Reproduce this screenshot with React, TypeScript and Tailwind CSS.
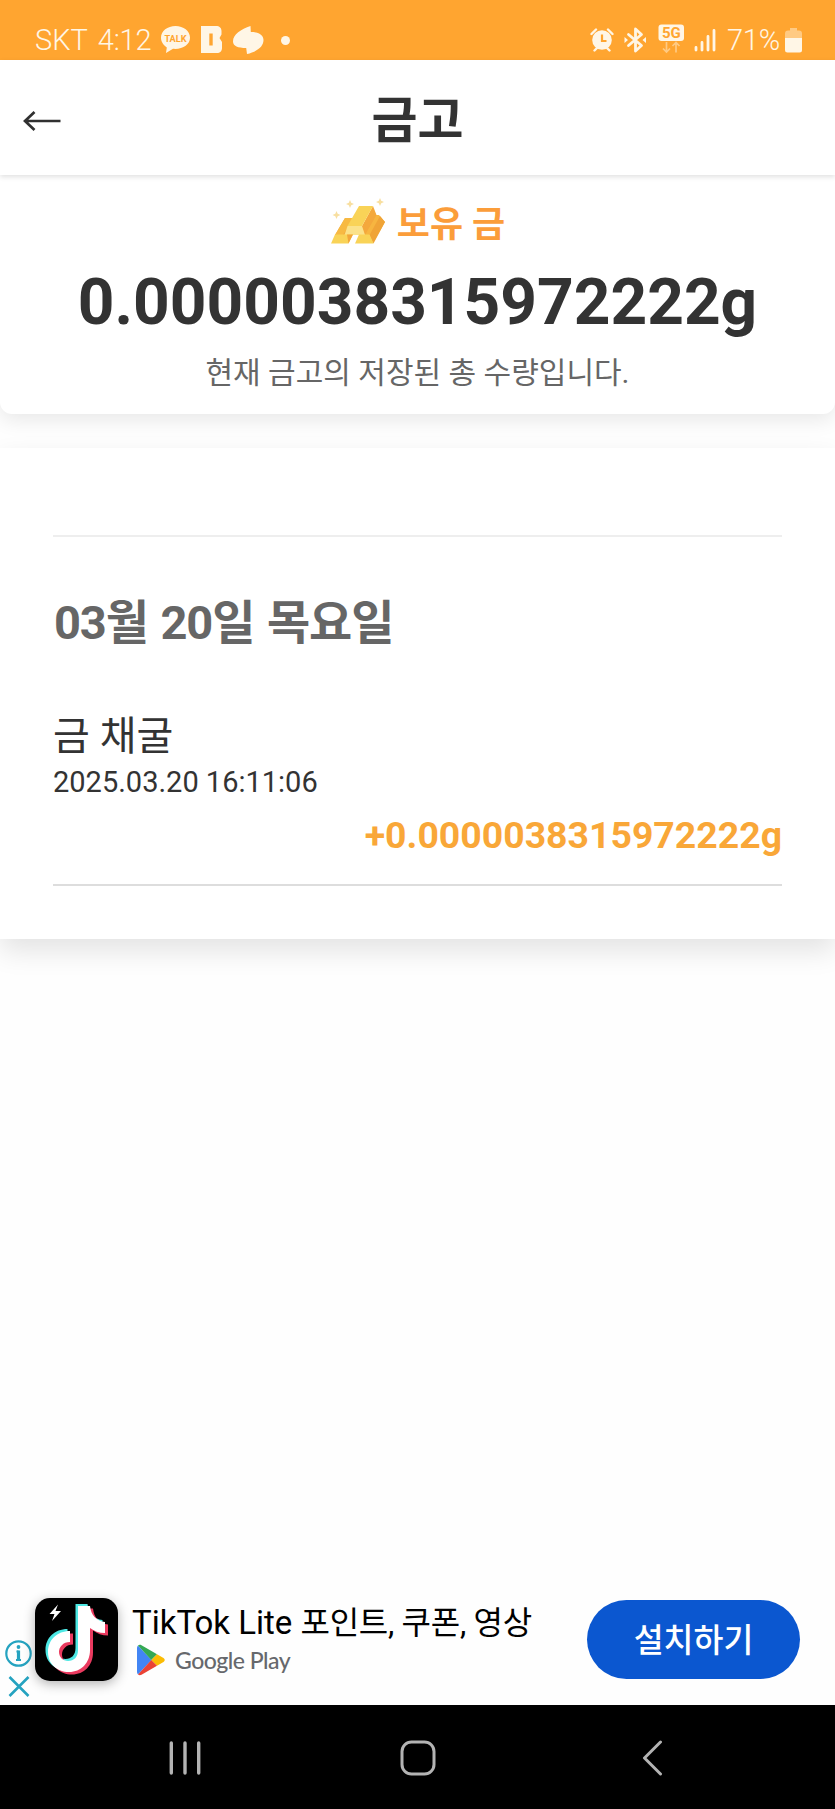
const cream = '#fff6e6';

function StatusBar() {
  return (
    <div className="flex h-[60px] shrink-0 items-end justify-between bg-[#ffa530] pl-[35px] pr-[33px] text-[29px] leading-[34px] font-light text-[#fff6e6]">
      <div className="mb-[3px] flex h-[34px] items-center">
        <span>SKT</span>
        <span className="ml-[10px] tracking-[-0.2px]">4:12</span>
        <svg className="ml-[10px]" width="29" height="28" viewBox="0 0 29 28" fill={cream}>
          <path d="M14.500 0C6.500 0 0 5 0 11.800c0 4.200 2.500 7.500 5.800 9.600L5 27l7-4.200c9.500.8 17-4 17-11C29 5 22.500 0 14.500 0z" />
          <text x="14.500" y="15.500" fontSize="9.200" fontWeight="700" textAnchor="middle" fill="#ffa530">TALK</text>
        </svg>
        <svg className="ml-[11px]" width="22" height="28" viewBox="0 0 22 28" fill={cream}>
          <path d="M0 0h15c3.500 0 5.500 2 5.500 5v3.500l-2 3.500 2.500 4v6c0 3-2 5-5 5H0z" />
          <path d="M8.300 7.500h3.400v12H8.300z" fill="#ffa530" />
        </svg>
        <svg className="ml-[10px]" width="31" height="28" viewBox="0 0 31 28" fill={cream}>
          <path d="M17.500 0l.3 6c7.500 0 12.700 2.500 12.700 8 0 6.500-6 11.500-16.500 14l-.8-6C5 22 0 20 0 15.500 0 8 8 3.500 17.500 0z" />
        </svg>
        <span className="ml-[17px] size-[9px] rounded-full bg-[#fff6e6]" />
      </div>
      <div className="mb-[3px] flex h-[34px] items-center">
        <svg width="24" height="26" viewBox="0 0 24 26">
          <circle cx="12" cy="13" r="9.800" fill={cream} />
          <path d="M1.500 7l4.500-4.500M22.500 7L18 2.500M4.500 23.500L7 21M19.500 23.500L17 21" stroke={cream} strokeWidth="2.400" fill="none" strokeLinecap="round" />
          <path d="M12 7.500v6.500h4.500" stroke="#ffa530" strokeWidth="2.200" fill="none" />
        </svg>
        <svg className="ml-[10px]" width="23" height="26" viewBox="0 0 23 26">
          <path d="M4.500 7.500l13 11-6 5.500V2l6 5.500-13 11" stroke={cream} strokeWidth="2.800" fill="none" strokeLinejoin="round" strokeLinecap="round" />
          <path d="M0.500 10v6l3.500-3zM22 10v6l-3.500-3z" fill={cream} />
        </svg>
        <svg className="mb-[2px] ml-[11px]" width="27" height="30" viewBox="0 0 27 30">
          <rect x="0.500" y="0.500" width="25.500" height="16.500" rx="3" fill={cream} />
          <text x="13.300" y="14" fontSize="15" fontWeight="700" textAnchor="middle" fill="#ffa530">5G</text>
          <path d="M8.500 18v9.500M5 24.500l3.500 3.500 3.500-3.500M18 28.500V19M14.500 22l3.500-3.500 3.500 3.500" stroke="#ffca83" strokeWidth="1.700" fill="none" />
        </svg>
        <svg className="ml-[9px]" width="22" height="24" viewBox="0 0 22 24" stroke={cream} strokeWidth="2.800" strokeLinecap="round">
          <path d="M2 19.500v2.500M8 14.500v7.500M14 8.500v13.500M20 2.500v19.500" />
        </svg>
        <span className="ml-[11px] tracking-[-0.2px]">71%</span>
        <svg className="ml-[5px]" width="17" height="25" viewBox="0 0 17 25">
          <path d="M5 0h7v2.500h2a3 3 0 013 3V10H0V5.500a3 3 0 013-3h2z" fill="#ffca83" />
          <path d="M0 10h17v12a2.500 2.500 0 01-2.500 2.500h-12A2.500 2.500 0 010 22z" fill={cream} />
        </svg>
      </div>
    </div>
  );
}

function Header() {
  return (
    <header className="relative z-10 grid h-[115px] shrink-0 grid-cols-[1fr_auto_1fr] items-center bg-white px-[23px] pt-[6px] shadow-[0_2px_5px_rgba(0,0,0,0.12)]">
      <svg width="38" height="20" viewBox="0 0 38 20" fill="none" stroke="#303030" strokeWidth="2.700">
        <path d="M37.500 10H2M11.500 1L2 10l9.500 9" />
      </svg>
      <h1 className="text-[50px] leading-[60px] font-bold text-[#333]">금고</h1>
    </header>
  );
}

function GoldBars() {
  return (
    <svg width="55" height="48" viewBox="0 0 55 48">
      <path d="M14 20h13L17 37H4z" fill="#f3aa3c" />
      <path d="M14 20h8L12 37H4z" fill="#f7b942" />
      <path d="M45 17h3l6 7-12 21-4-8H26z" fill="#f7b540" />
      <path d="M54 24L42.500 45.500 38.500 37 49 18z" fill="#f0a437" />
      <path d="M42 8l3.500 9L34 37h-7l4-9z" fill="#f4a83c" />
      <path d="M28 8h14L31 28H16.500z" fill="#f9d357" />
      <path d="M16.500 28H31l3 9H13.500z" fill="#fbe28a" />
      <path d="M4 36.500h18L17.500 45.500H0z" fill="#f9d357" />
      <path d="M16 36.500h6l-4.500 9z" fill="#f2a63a" />
      <path d="M28 36.500h10.500l4 9H24z" fill="#f9d357" />
      <path d="M19 2l1.200 2.800L23 6l-2.800 1.200L19 10l-1.200-2.800L15 6l2.800-1.200zM49 0l1.200 2.800L53 4l-2.800 1.200L49 8l-1.200-2.800L45 4l2.800-1.200zM5.500 13l1.200 2.800L9.500 17l-2.800 1.200L5.500 21l-1.200-2.800L1.500 17l2.800-1.200z" fill="#f8dfa0" />
    </svg>
  );
}

function Balance() {
  return (
    <section className="h-[239px] shrink-0 rounded-b-[12px] bg-white pt-[23px] text-center shadow-[0_6px_20px_rgba(0,0,0,0.09)]">
      <div className="flex h-[48px] items-center justify-center gap-[11px] pl-px">
        <GoldBars />
        <h2 className="mt-[5px] text-[36px] leading-[48px] font-bold text-[#fb9d3a]">보유 금</h2>
      </div>
      <p className="mt-[19px] text-[64px] leading-[76px] font-bold text-[#333]">0.0000038315972222g</p>
      <p className="mt-[12px] text-[30px] leading-[40px] text-[#666]">현재 금고의 저장된 총 수량입니다.</p>
    </section>
  );
}

function History() {
  return (
    <section className="mt-[34px] h-[491px] shrink-0 bg-white px-[53px] pt-[87px] shadow-[0_12px_26px_rgba(0,0,0,0.11)]">
      <div className="h-[2px] bg-[#eee]" />
      <h3 className="mt-[56px] pl-px text-[47px] leading-[60px] font-bold tracking-[-1.1px] [word-spacing:2px] text-[#666]">03월 20일 목요일</h3>
      <div className="mt-[59px] border-b-2 border-[#ddd] pb-[27px] text-[#333]">
        <p className="text-[40px] leading-[50px]">금 채굴</p>
        <p className="mt-px text-[29px] leading-[38px]">2025.03.20 16:11:06</p>
        <p className="mt-[12px] text-right text-[37.400px] leading-[44px] font-bold text-[#f9a738]">+0.0000038315972222g</p>
      </div>
    </section>
  );
}

function TikTokIcon() {
  const note = 'M43 8h12c1 9 6 15 15 16v11c-6 0-11-2-15-5v22c0 13-9 22-21 22S13 66 13 54s9-21 22-21v11c-7 0-11 5-11 10s4 9 9 9c6 0 10-4 10-11z';
  return (
    <svg className="rounded-[15px] bg-black shadow-[0_3px_12px_rgba(0,0,0,0.3)]" width="83" height="83" viewBox="0 0 83 83">
      <path d={note} fill="#4de8e4" transform="translate(-2.500 -2)" />
      <path d={note} fill="#ea3a5f" transform="translate(3 2.500)" />
      <path d={note} fill="#fff" />
      <path d="M23 6.500l-8.500 9.500h5l-2.500 7 9-10h-5.500z" fill="#fff" />
    </svg>
  );
}

function AdBanner() {
  return (
    <aside className="mt-auto flex h-[115px] shrink-0 items-start bg-[#fefefe]">
      <div className="mt-[50px] flex w-[35px] shrink-0 flex-col items-center gap-[9px] pl-[2px]">
        <svg width="27" height="27" viewBox="0 0 27 27" fill="none" stroke="#25a3c0">
          <circle cx="13.500" cy="13.500" r="12.200" strokeWidth="2.200" />
          <path d="M13.500 10.500v10" strokeWidth="3.200" />
          <path d="M11.500 11.500h2M11 20h5" strokeWidth="1.800" />
          <circle cx="13.500" cy="7" r="1.900" fill="#25a3c0" stroke="none" />
        </svg>
        <svg width="22" height="21" viewBox="0 0 22 21" stroke="#25a3c0" strokeWidth="2.600">
          <path d="M1.500 1l19 19M20.500 1l-19 19" />
        </svg>
      </div>
      <div className="mt-[8px] shrink-0">
        <TikTokIcon />
      </div>
      <div className="mt-[12px] ml-[14px]">
        <p className="text-[33px] leading-[42px] whitespace-nowrap text-black">
          TikTok Lite <span className="text-[32px] tracking-[-0.300px]">포인트, 쿠폰, 영상</span>
        </p>
        <div className="ml-[5px] flex items-center">
          <svg width="28" height="32" viewBox="0 0 28 32">
            <path d="M1 1.500L14.500 16 1 30.500C.300 29.800 0 29 0 28V4c0-1 .300-1.800 1-2.500z" fill="#4285f4" />
            <path d="M1 1.500C2 .700 3.300.600 4.500 1.300L20 10.200 14.300 16z" fill="#34a853" />
            <path d="M20 10.200l6.500 3.800c1.700 1 1.700 3 0 4L20 21.800 14.300 16z" fill="#fbbc04" />
            <path d="M1 30.500c1 .8 2.300.9 3.500.2L20 21.800 14.300 16z" fill="#ea4335" />
          </svg>
          <span className="ml-[10px] font-['Lato',sans-serif] text-[23px] leading-[32px] font-medium tracking-[-0.500px] text-[#66686c]">Google Play</span>
        </div>
      </div>
      <button className="mt-[10px] mr-[35px] ml-auto h-[79px] w-[213px] shrink-0 rounded-full bg-[#0b57d0] pt-[3px] text-[32.500px] font-medium text-white">설치하기</button>
    </aside>
  );
}

function NavBar() {
  return (
    <nav className="flex h-[104px] shrink-0 items-center justify-between bg-black pt-[2px] pr-[172px] pl-[169px]">
      <svg width="34" height="34" viewBox="0 0 34 34" stroke="#b3b3b3" strokeWidth="3.400" strokeLinecap="round">
        <path d="M2.300 2v30M16 2v30M29.700 2v30" />
      </svg>
      <svg className="mr-[9px]" width="36" height="36" viewBox="0 0 36 36" fill="none" stroke="#b3b3b3" strokeWidth="3">
        <rect x="2" y="2" width="32" height="32" rx="9.500" />
      </svg>
      <svg width="21" height="36" viewBox="0 0 21 36" fill="none" stroke="#b3b3b3" strokeWidth="3" strokeLinecap="round" strokeLinejoin="round">
        <path d="M18.500 2L2.500 18l16 16" />
      </svg>
    </nav>
  );
}

export default function App() {
  return (
    <div className="flex h-[1809px] w-[835px] flex-col overflow-hidden bg-[#fefefe] font-['Roboto','Noto_Sans_CJK_KR',sans-serif]">
      <StatusBar />
      <Header />
      <Balance />
      <History />
      <AdBanner />
      <NavBar />
    </div>
  );
}
